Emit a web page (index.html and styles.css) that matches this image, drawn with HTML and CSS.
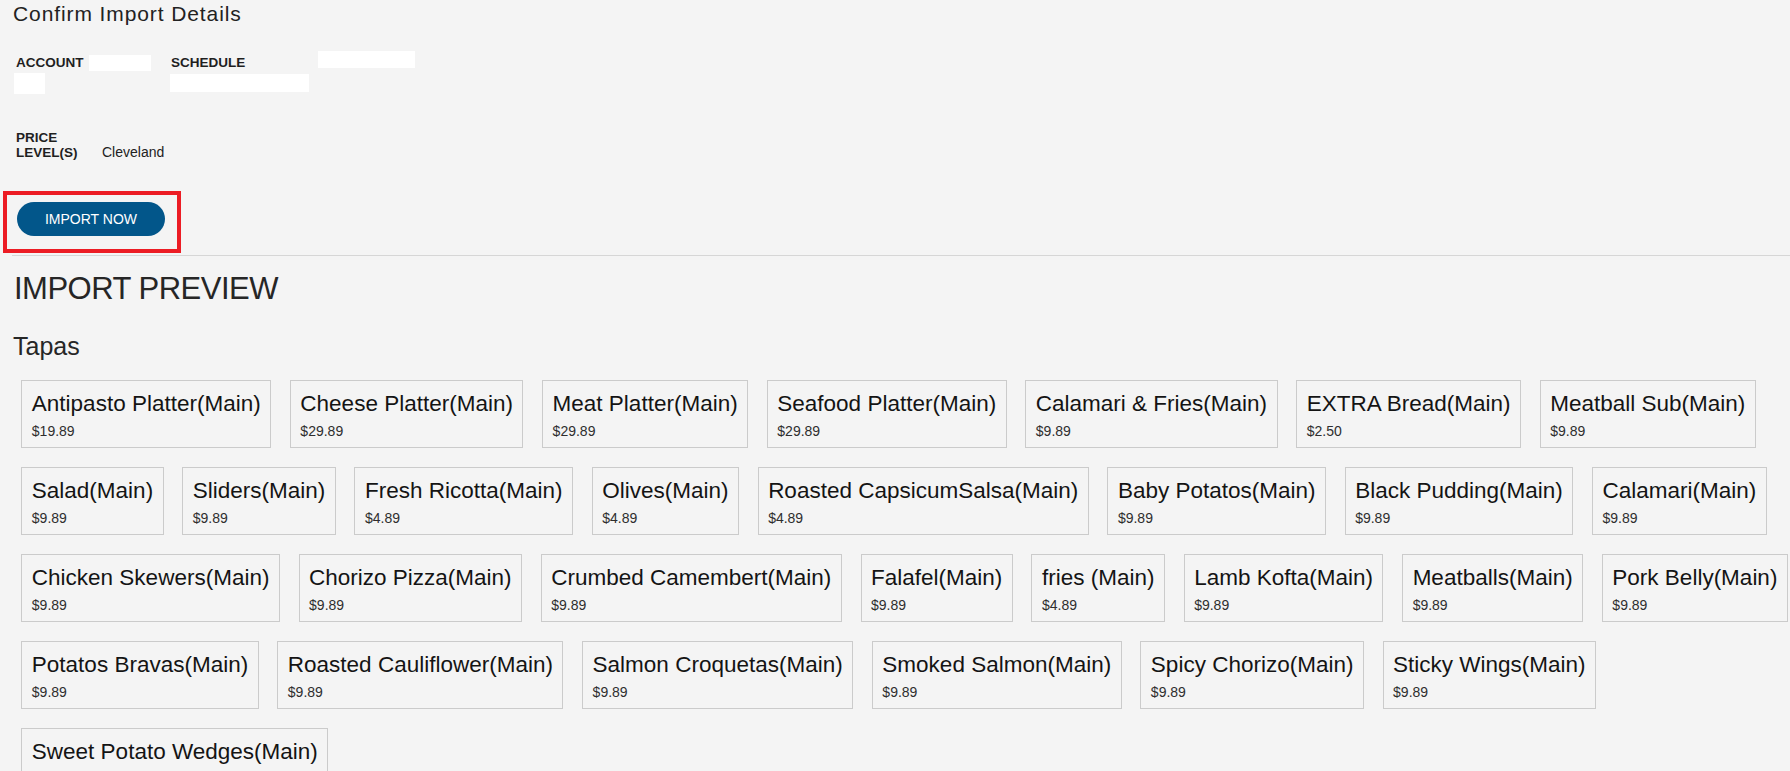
FILE: index.html
```html
<!DOCTYPE html>
<html lang="en">
<head>
<meta charset="utf-8">
<title>Confirm Import Details</title>
<link rel="stylesheet" href="styles.css">
</head>
<body>
<main class="page">
  <h1 class="confirm-title">Confirm Import Details</h1>

  <section class="details-row">
    <div class="detail detail-account">
      <div class="detail-line">
        <span class="detail-label">ACCOUNT</span>
        <span class="redact redact-a1"></span>
      </div>
      <span class="redact redact-a2"></span>
    </div>
    <div class="detail detail-schedule">
      <div class="detail-line">
        <span class="detail-label">SCHEDULE</span>
      </div>
      <span class="redact redact-s1"></span>
    </div>
    <div class="detail detail-extra">
      <span class="redact redact-x1"></span>
    </div>
  </section>

  <section class="price-row">
    <span class="price-label">PRICE LEVEL(S)</span>
    <span class="price-value">Cleveland</span>
  </section>

  <div class="import-box">
    <button class="import-btn" type="button">IMPORT NOW</button>
  </div>

  <hr class="divider">

  <h2 class="preview-title">IMPORT PREVIEW</h2>
  <h3 class="category">Tapas</h3>

  <section class="menu">
    <div class="menu-row">
      <div class="item"><div class="item-name">Antipasto Platter(Main)</div><div class="item-price">$19.89</div></div>
      <div class="item"><div class="item-name">Cheese Platter(Main)</div><div class="item-price">$29.89</div></div>
      <div class="item"><div class="item-name">Meat Platter(Main)</div><div class="item-price">$29.89</div></div>
      <div class="item"><div class="item-name">Seafood Platter(Main)</div><div class="item-price">$29.89</div></div>
      <div class="item"><div class="item-name">Calamari &amp; Fries(Main)</div><div class="item-price">$9.89</div></div>
      <div class="item"><div class="item-name">EXTRA Bread(Main)</div><div class="item-price">$2.50</div></div>
      <div class="item"><div class="item-name">Meatball Sub(Main)</div><div class="item-price">$9.89</div></div>
    </div>
    <div class="menu-row">
      <div class="item"><div class="item-name">Salad(Main)</div><div class="item-price">$9.89</div></div>
      <div class="item"><div class="item-name">Sliders(Main)</div><div class="item-price">$9.89</div></div>
      <div class="item"><div class="item-name">Fresh Ricotta(Main)</div><div class="item-price">$4.89</div></div>
      <div class="item"><div class="item-name">Olives(Main)</div><div class="item-price">$4.89</div></div>
      <div class="item"><div class="item-name">Roasted CapsicumSalsa(Main)</div><div class="item-price">$4.89</div></div>
      <div class="item"><div class="item-name">Baby Potatos(Main)</div><div class="item-price">$9.89</div></div>
      <div class="item"><div class="item-name">Black Pudding(Main)</div><div class="item-price">$9.89</div></div>
      <div class="item"><div class="item-name">Calamari(Main)</div><div class="item-price">$9.89</div></div>
    </div>
    <div class="menu-row">
      <div class="item"><div class="item-name">Chicken Skewers(Main)</div><div class="item-price">$9.89</div></div>
      <div class="item"><div class="item-name">Chorizo Pizza(Main)</div><div class="item-price">$9.89</div></div>
      <div class="item"><div class="item-name">Crumbed Camembert(Main)</div><div class="item-price">$9.89</div></div>
      <div class="item"><div class="item-name">Falafel(Main)</div><div class="item-price">$9.89</div></div>
      <div class="item"><div class="item-name">fries (Main)</div><div class="item-price">$4.89</div></div>
      <div class="item"><div class="item-name">Lamb Kofta(Main)</div><div class="item-price">$9.89</div></div>
      <div class="item"><div class="item-name">Meatballs(Main)</div><div class="item-price">$9.89</div></div>
      <div class="item"><div class="item-name">Pork Belly(Main)</div><div class="item-price">$9.89</div></div>
    </div>
    <div class="menu-row">
      <div class="item"><div class="item-name">Potatos Bravas(Main)</div><div class="item-price">$9.89</div></div>
      <div class="item"><div class="item-name">Roasted Cauliflower(Main)</div><div class="item-price">$9.89</div></div>
      <div class="item"><div class="item-name">Salmon Croquetas(Main)</div><div class="item-price">$9.89</div></div>
      <div class="item"><div class="item-name">Smoked Salmon(Main)</div><div class="item-price">$9.89</div></div>
      <div class="item"><div class="item-name">Spicy Chorizo(Main)</div><div class="item-price">$9.89</div></div>
      <div class="item"><div class="item-name">Sticky Wings(Main)</div><div class="item-price">$9.89</div></div>
    </div>
    <div class="menu-row">
      <div class="item"><div class="item-name">Sweet Potato Wedges(Main)</div><div class="item-price">$9.89</div></div>
    </div>
  </section>
</main>
</body>
</html>
```

FILE: styles.css
```css
html, body {
  margin: 0;
  padding: 0;
  overflow: hidden;
  background: #f4f4f4;
}

body {
  font-family: "Liberation Sans", Arial, sans-serif;
  color: #222;
}

.page {
  padding: 0;
}

.confirm-title {
  margin: 2px 0 0 13px;
  font-size: 21px;
  line-height: 24px;
  font-weight: 400;
  letter-spacing: 0.9px;
  color: #222;
}

/* ---- details ---- */
.details-row {
  display: flex;
  align-items: flex-start;
  margin-top: 25px;
  padding-left: 14px;
}

.detail-label {
  font-size: 13.5px;
  font-weight: 700;
  line-height: 18px;
  color: #1f1f1f;
}

.detail-line {
  display: flex;
  align-items: center;
  height: 18px;
}

.redact {
  display: block;
  background: #ffffff;
}

.detail-account {
  width: 156px;
  padding-top: 3px;
}

.detail-account .detail-label {
  margin-left: 2px;
}

.redact-a1 {
  width: 62px;
  height: 16px;
  margin-left: 5px;
}

.redact-a2 {
  width: 31px;
  height: 21px;
  margin-top: 1px;
}

.detail-schedule {
  width: 148px;
  padding-top: 3px;
}

.detail-schedule .detail-label {
  margin-left: 1px;
}

.redact-s1 {
  width: 139px;
  height: 18px;
  margin-top: 2px;
}

.redact-x1 {
  width: 97px;
  height: 17px;
}

/* ---- price level ---- */
.price-row {
  display: flex;
  align-items: flex-end;
  margin-top: 35.5px;
  padding-left: 16px;
}

.price-label {
  width: 72px;
  font-size: 13.5px;
  font-weight: 700;
  line-height: 15px;
  color: #1f1f1f;
}

.price-value {
  margin-left: 14px;
  font-size: 14px;
  line-height: 15px;
  color: #222;
}

/* ---- import button with highlight ---- */
.import-box {
  width: fit-content;
  margin: 31.5px 0 0 3px;
  padding: 7px 12px 13px 10px;
  border: 4px solid #ec1c24;
}

.import-btn {
  display: block;
  width: 148px;
  height: 34px;
  border: 0;
  border-radius: 17px;
  background: #02568a;
  color: #ffffff;
  font-family: "Liberation Sans", Arial, sans-serif;
  font-size: 14px;
  line-height: 34px;
  padding: 0;
  text-align: center;
  cursor: pointer;
}

.divider {
  margin: 2px 0 0 12px;
  border: 0;
  border-top: 1px solid #d6d6d6;
  height: 0;
}

.preview-title {
  margin: 15px 0 0 14px;
  font-size: 31px;
  line-height: 36px;
  font-weight: 400;
  letter-spacing: -0.5px;
  color: #262626;
}

.category {
  margin: 24px 0 0 13px;
  font-size: 25px;
  line-height: 30px;
  font-weight: 400;
  color: #262626;
}

/* ---- menu items ---- */
.menu {
  margin-top: 9px;
  padding-left: 12px;
  display: flex;
  flex-direction: column;
}

.menu-row {
  display: flex;
  flex-wrap: nowrap;
}

.item {
  flex: none;
  margin: 9.5px 9.33px;
  padding: 10px 9.5px 5px;
  border: 1px solid #cbcbcb;
}

.item-name {
  font-size: 22.5px;
  line-height: 26px;
  color: #141414;
  white-space: nowrap;
}

.item-price {
  margin-top: 4px;
  font-size: 14px;
  line-height: 21px;
  color: #2e2e2e;
}
```
